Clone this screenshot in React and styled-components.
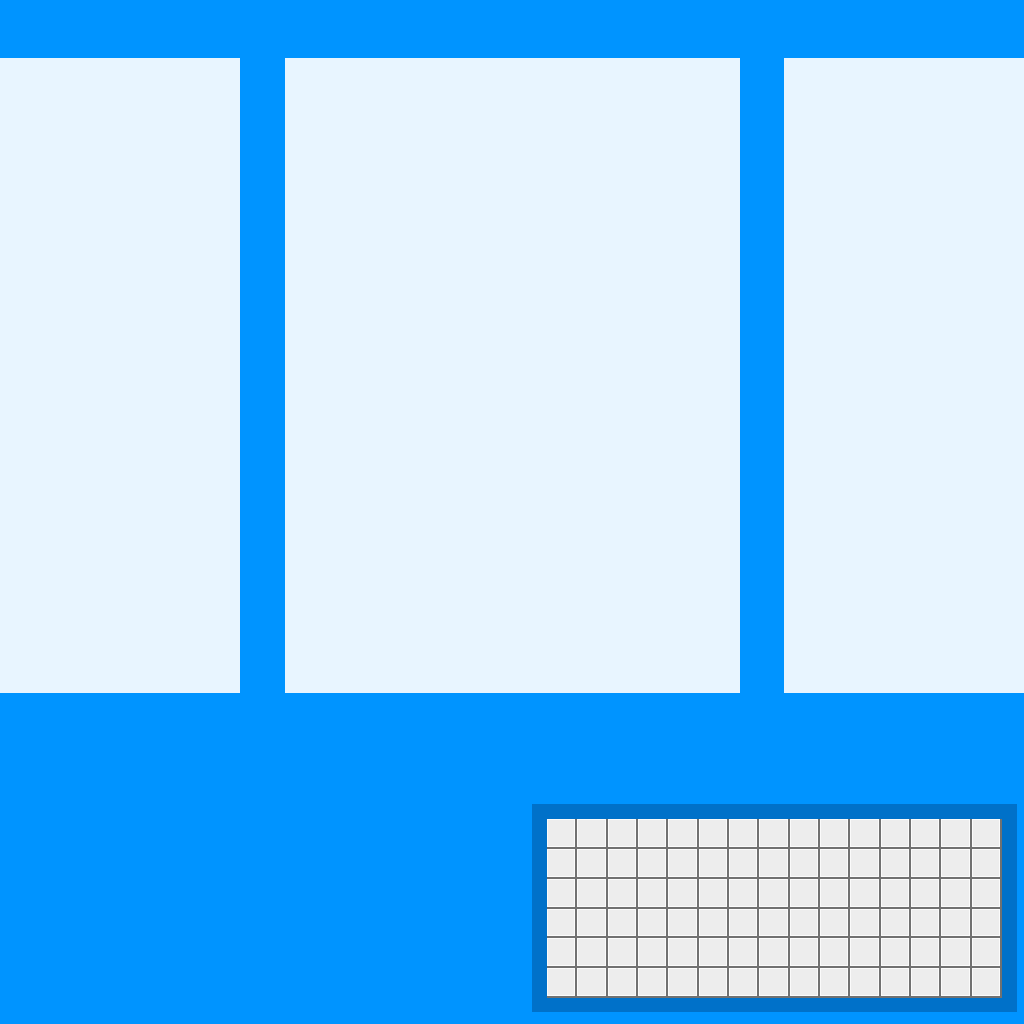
import React from "react";
import styled, { createGlobalStyle } from "styled-components";

const GlobalStyle = createGlobalStyle`
  html, body {
    margin: 0;
    padding: 0;
    background: #0094ff;
    font-family: "Liberation Sans", Arial, sans-serif;
  }
`;

const Page = styled.div`
  width: 1024px;
  height: 1024px;
  background: #0094ff;
  padding-top: 58px;
  box-sizing: border-box;
  display: flex;
  flex-direction: column;
  overflow: hidden;
`;

const Columns = styled.div`
  display: grid;
  grid-template-columns: 240px 455px 240px;
  justify-content: space-between;
  height: 635px;
`;

const Panel = styled.div`
  background: #e8f5ff;
`;

const Footer = styled.div`
  display: flex;
  justify-content: flex-end;
  padding: 111px 7px 0 0;
`;

const Tray = styled.div`
  width: 485px;
  height: 208px;
  box-sizing: border-box;
  padding: 15px;
  background: #0071c9;
`;

const Keys = styled.div`
  display: grid;
  grid-template-columns: repeat(15, 1fr);
  grid-template-rows: repeat(6, 1fr);
  width: 455px;
  height: 179px;
`;

const Key = styled.div`
  border-right: 2px solid #717171;
  border-bottom: 2px solid #717171;
  background: #ededed;
  box-shadow: inset 0 0 0 1px #fbfbfb;
`;

export default function App() {
  const keys = Array.from({ length: 90 }, (_, i) => i);
  return (
    <>
      <GlobalStyle />
      <Page>
        <Columns>
          <Panel />
          <Panel />
          <Panel />
        </Columns>
        <Footer>
          <Tray>
            <Keys>
              {keys.map((k) => (
                <Key key={k} />
              ))}
            </Keys>
          </Tray>
        </Footer>
      </Page>
    </>
  );
}
